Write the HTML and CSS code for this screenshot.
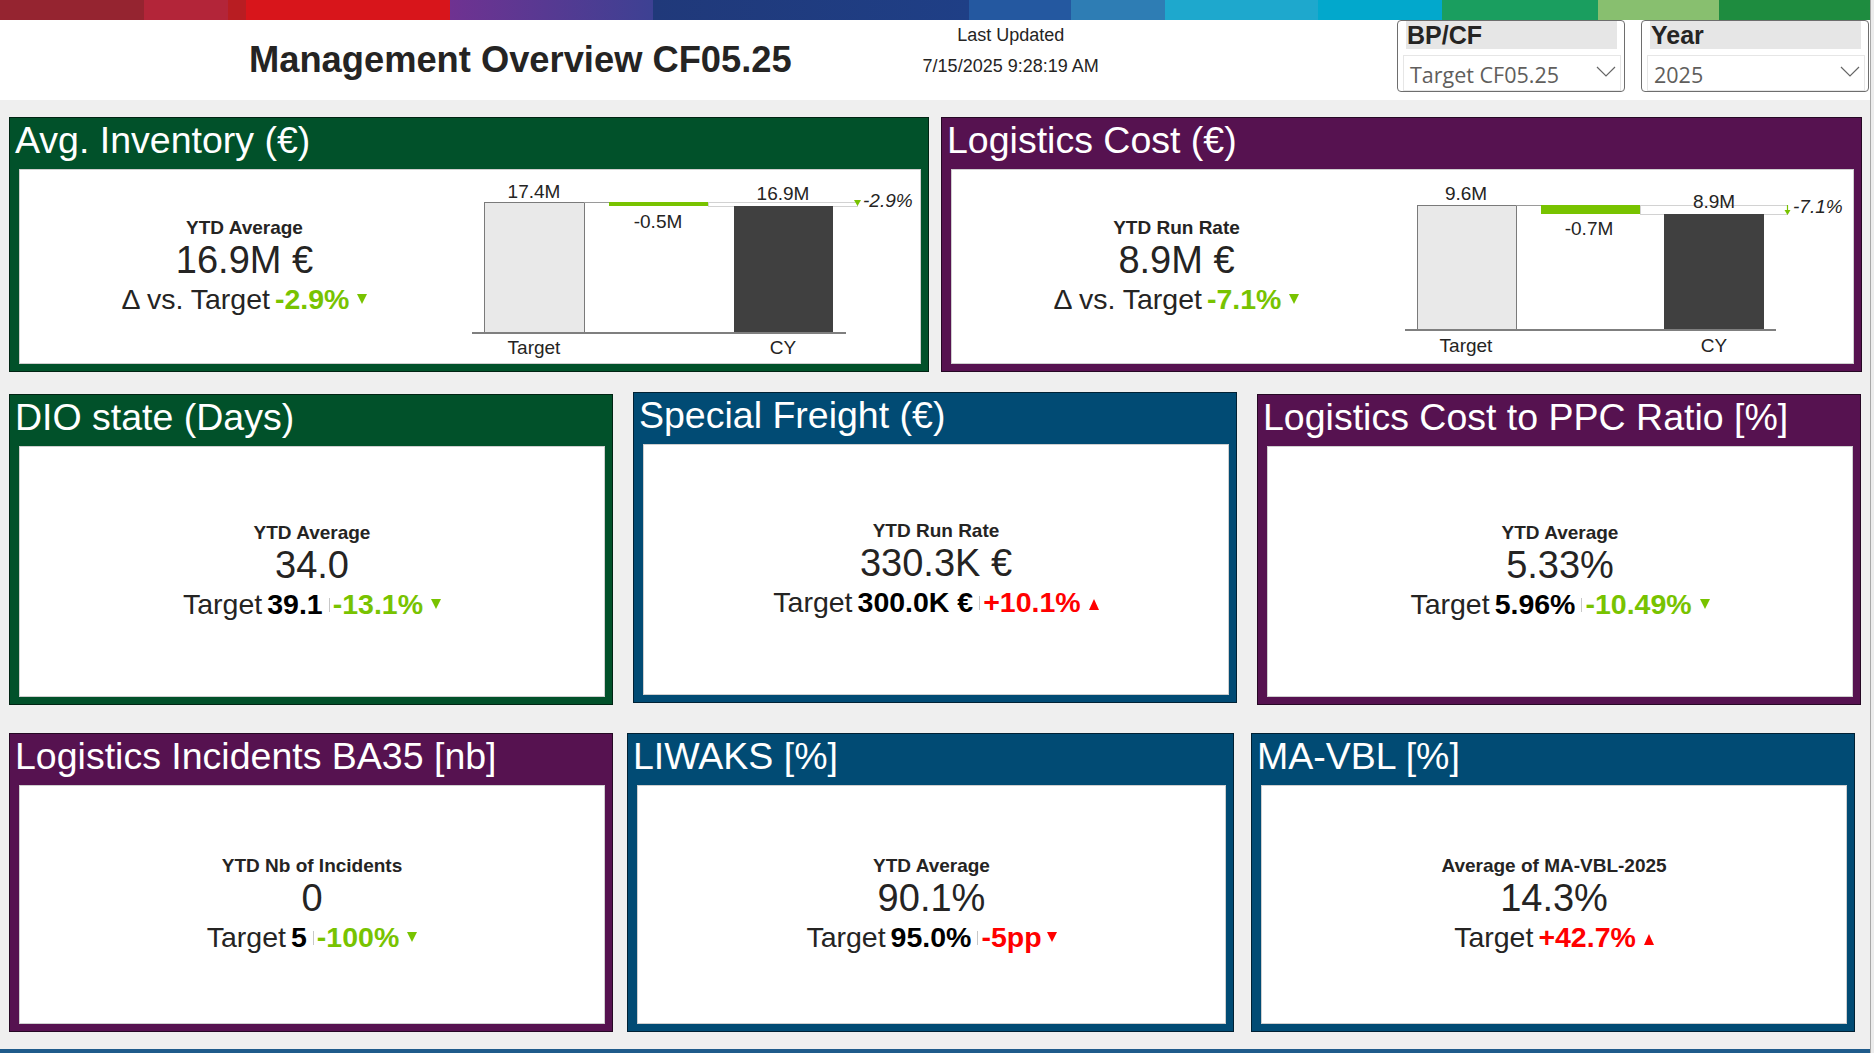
FILE: index.html
```html
<!DOCTYPE html>
<html lang="en">
<head>
<meta charset="utf-8">
<title>Management Overview CF05.25</title>
<link rel="stylesheet" href="styles.css">
</head>
<body>
<div class="page">
  <div class="topbar"></div>
  <header class="header">
    <div class="logo"></div>
    <h1 class="title">Management Overview CF05.25</h1>
    <div class="updated">
      <div>Last Updated</div>
      <div>7/15/2025 9:28:19 AM</div>
    </div>
    <div class="slicers">
      <div class="slicer">
        <div class="slicer-head">BP/CF</div>
        <div class="slicer-drop"><span>Target CF05.25</span>
          <svg class="chev" width="20" height="11" viewBox="0 0 20 11"><path d="M1 1 L10 10 L19 1" fill="none" stroke="#666" stroke-width="1.2"/></svg>
        </div>
      </div>
      <div class="slicer">
        <div class="slicer-head">Year</div>
        <div class="slicer-drop"><span>2025</span>
          <svg class="chev" width="20" height="11" viewBox="0 0 20 11"><path d="M1 1 L10 10 L19 1" fill="none" stroke="#666" stroke-width="1.2"/></svg>
        </div>
      </div>
    </div>
  </header>

  <main class="content">
    <section class="row row1">
      <div class="card green w920">
        <div class="card-title">Avg. Inventory (€)</div>
        <div class="card-body split">
          <div class="kpi kpi-col">
            <div class="kpi-label">YTD Average</div>
            <div class="kpi-value">16.9M €</div>
            <div class="kpi-delta">Δ vs. Target<b class="good gap5">-2.9%</b><span class="tri down good"></span></div>
          </div>
          <svg class="chart" width="451" height="193" viewBox="0 0 451 193">
            <rect x="15.5" y="32.5" width="100" height="131" fill="#e9e9e9" stroke="#7a7a7a" stroke-width="1"/>
            <line x1="115" y1="32.5" x2="140" y2="32.5" stroke="#9a9a9a" stroke-width="1"/>
            <rect x="140" y="32" width="99" height="4" fill="#78c300"/>
            <rect x="239.5" y="32.5" width="149" height="4" fill="none" stroke="#d2d2d2" stroke-width="1"/>
            <rect x="265" y="36" width="99" height="127" fill="#404040"/>
            <line x1="3" y1="163" x2="377" y2="163" stroke="#7f7f7f" stroke-width="2"/>
            <path d="M385 30 L392 30 L388.5 36 Z" fill="#78c300"/>
            <text x="65" y="28" class="ct" text-anchor="middle">17.4M</text>
            <text x="314" y="30" class="ct" text-anchor="middle">16.9M</text>
            <text x="189" y="58" class="ct" text-anchor="middle">-0.5M</text>
            <text x="394" y="37" class="ct it">-2.9%</text>
            <text x="65" y="184" class="ct" text-anchor="middle">Target</text>
            <text x="314" y="184" class="ct" text-anchor="middle">CY</text>
          </svg>
        </div>
      </div>
      <div class="card purple w921">
        <div class="card-title">Logistics Cost (€)</div>
        <div class="card-body split">
          <div class="kpi kpi-col">
            <div class="kpi-label">YTD Run Rate</div>
            <div class="kpi-value">8.9M €</div>
            <div class="kpi-delta">Δ vs. Target<b class="good gap5">-7.1%</b><span class="tri down good"></span></div>
          </div>
          <svg class="chart" width="452" height="193" viewBox="0 0 452 193">
            <rect x="16.5" y="35.5" width="99" height="125" fill="#e9e9e9" stroke="#7a7a7a" stroke-width="1"/>
            <line x1="115" y1="35.5" x2="140" y2="35.5" stroke="#9a9a9a" stroke-width="1"/>
            <rect x="140" y="35" width="99" height="9" fill="#78c300"/>
            <rect x="239.5" y="35.5" width="147" height="9" fill="none" stroke="#d2d2d2" stroke-width="1"/>
            <rect x="263" y="44" width="100" height="116" fill="#404040"/>
            <line x1="4" y1="160" x2="375" y2="160" stroke="#7f7f7f" stroke-width="2"/>
            <line x1="386.5" y1="35" x2="386.5" y2="42" stroke="#78c300" stroke-width="1.2"/>
            <path d="M383.5 40 L389.5 40 L386.5 45 Z" fill="#78c300"/>
            <text x="65" y="30" class="ct" text-anchor="middle">9.6M</text>
            <text x="313" y="38" class="ct" text-anchor="middle">8.9M</text>
            <text x="188" y="65" class="ct" text-anchor="middle">-0.7M</text>
            <text x="392" y="43" class="ct it">-7.1%</text>
            <text x="65" y="182" class="ct" text-anchor="middle">Target</text>
            <text x="313" y="182" class="ct" text-anchor="middle">CY</text>
          </svg>
        </div>
      </div>
    </section>

    <section class="row row2">
      <div class="card green w604">
        <div class="card-title">DIO state (Days)</div>
        <div class="card-body center">
          <div class="kpi">
            <div class="kpi-label">YTD Average</div>
            <div class="kpi-value">34.0</div>
            <div class="kpi-delta">Target<b class="tv">39.1</b><i class="sep"></i><b class="good">-13.1%</b><span class="tri down good"></span></div>
          </div>
        </div>
      </div>
      <div class="card blue w604 raised">
        <div class="card-title">Special Freight (€)</div>
        <div class="card-body center">
          <div class="kpi">
            <div class="kpi-label">YTD Run Rate</div>
            <div class="kpi-value">330.3K €</div>
            <div class="kpi-delta">Target<b class="tv">300.0K €</b><i class="sep"></i><b class="bad">+10.1%</b><span class="tri up bad"></span></div>
          </div>
        </div>
      </div>
      <div class="card purple w604">
        <div class="card-title">Logistics Cost to PPC Ratio [%]</div>
        <div class="card-body center">
          <div class="kpi">
            <div class="kpi-label">YTD Average</div>
            <div class="kpi-value">5.33%</div>
            <div class="kpi-delta">Target<b class="tv">5.96%</b><i class="sep"></i><b class="good">-10.49%</b><span class="tri down good"></span></div>
          </div>
        </div>
      </div>
    </section>

    <section class="row row3">
      <div class="card purple w604">
        <div class="card-title">Logistics Incidents BA35 [nb]</div>
        <div class="card-body center">
          <div class="kpi">
            <div class="kpi-label">YTD Nb of Incidents</div>
            <div class="kpi-value">0</div>
            <div class="kpi-delta">Target<b class="tv">5</b><i class="sep"></i><b class="good">-100%</b><span class="tri down good"></span></div>
          </div>
        </div>
      </div>
      <div class="card blue w607">
        <div class="card-title">LIWAKS [%]</div>
        <div class="card-body center">
          <div class="kpi">
            <div class="kpi-label">YTD Average</div>
            <div class="kpi-value">90.1%</div>
            <div class="kpi-delta">Target<b class="tv">95.0%</b><i class="sep"></i><b class="bad">-5pp</b><span class="tri down bad tight"></span></div>
          </div>
        </div>
      </div>
      <div class="card blue w604">
        <div class="card-title">MA-VBL [%]</div>
        <div class="card-body center">
          <div class="kpi">
            <div class="kpi-label">Average of MA-VBL-2025</div>
            <div class="kpi-value">14.3%</div>
            <div class="kpi-delta">Target<b class="bad gap5">+42.7%</b><span class="tri up bad"></span></div>
          </div>
        </div>
      </div>
    </section>
  </main>
  <div class="bottomline"></div>
</div>
</body>
</html>
```

FILE: styles.css
```css
* { box-sizing: border-box; }
html, body { margin: 0; padding: 0; }
body {
  background: #ececec;
  font-family: "Liberation Sans", Arial, sans-serif;
  color: #252423;
  width: 1874px;
  height: 1053px;
  overflow: hidden;
}
.page {
  width: 1871px;
  height: 1053px;
  background: #efefef;
  border-right: 1px solid #a8a8a8;
  display: flex;
  flex-direction: column;
}
.topbar {
  height: 20px;
  flex: none;
  background: linear-gradient(90deg,
    #952430 0 144px, #b32539 144px 228px, #b81d22 228px 246px,
    #d8151b 246px 450px, #6f3291 450px, #3d4193 653px,
    #20397a 653px, #1f3f86 969px, #2458a0 969px 1071px,
    #2e7db4 1071px 1165px, #1ea8cd 1165px 1318px, #02a8cc 1318px 1442px,
    #1a9e5f 1442px 1598px, #88bf6f 1598px 1719px, #1e8c3f 1719px);
}
.header {
  height: 80px;
  flex: none;
  background: #fff;
  display: flex;
  align-items: flex-start;
}
.logo { width: 249px; flex: none; }
.title {
  margin: 0;
  padding-top: 20px;
  font-size: 36.3px;
  line-height: 40px;
  font-weight: bold;
  color: #252423;
  white-space: nowrap;
}
.updated {
  margin-left: 124px;
  width: 190px;
  text-align: center;
  font-size: 18px;
  line-height: 31px;
  color: #252423;
  white-space: nowrap;
}
.slicers {
  margin-left: auto;
  display: flex;
  gap: 16px;
  padding-right: 1px;
}
.slicer {
  width: 228px;
  height: 72px;
  border: 1px solid #6e6e6e;
  border-radius: 4px;
  padding: 0 7px 0 8px;
  display: flex;
  flex-direction: column;
}
.slicer-head {
  height: 28px;
  background: #e6e6e6;
  font-weight: bold;
  font-size: 25px;
  line-height: 29px;
  padding-left: 1px;
  color: #252423;
}
.slicer-drop {
  margin: 6px -4px 0 -3px;
  height: 36px;
  border: 1px solid #e6e6e6;
  display: flex;
  align-items: center;
  justify-content: space-between;
  padding: 2px 4px 0 6px;
  font-family: "Open Sans", "Noto Sans", sans-serif;
  font-size: 21.5px;
  color: #605e5c;
}
.chev { margin-top: -6px; }

.content {
  flex: none;
  padding-top: 17px;
}
.row {
  display: flex;
  align-items: flex-start;
  padding-left: 9px;
}
.row1 { height: 255px; gap: 12px; }
.row2 { height: 311px; margin-top: 22px; gap: 20px; }
.row3 { height: 299px; margin-top: 28px; }
.row3 .card:nth-child(2) { margin-left: 14px; }
.row3 .card:nth-child(3) { margin-left: 17px; }

.card {
  height: 100%;
  border: 1px solid rgba(0, 0, 0, 0.55);
  padding: 0 7px 7px 9px;
  display: flex;
  flex-direction: column;
}
.row2 .card.raised { margin-top: -2px; }
.w920 { width: 920px; }
.w921 { width: 921px; }
.w604 { width: 604px; }
.w607 { width: 607px; }
.green { background: #01512a; }
.purple { background: #561250; }
.blue { background: #014b74; }

.card-title {
  height: 51px;
  flex: none;
  margin-left: -4px;
  font-size: 37.5px;
  line-height: 44px;
  color: #fff;
  white-space: nowrap;
}
.card-body {
  flex: 1;
  background: #fff;
  border: 1px solid #cfcfcf;
  min-height: 0;
}
.card-body.split { display: flex; }
.card-body.center {
  display: flex;
  align-items: center;
  justify-content: center;
}
.kpi { text-align: center; white-space: nowrap; }
.kpi-col {
  width: 449px;
  flex: none;
  display: flex;
  flex-direction: column;
  justify-content: center;
}
.kpi-label {
  font-size: 19px;
  line-height: 22px;
  font-weight: bold;
  color: #252423;
}
.kpi-value {
  font-size: 38px;
  line-height: 42px;
  color: #252423;
}
.kpi-delta {
  font-size: 28.5px;
  line-height: 36px;
  color: #252423;
}
.kpi-delta b { font-weight: bold; }
.tv { color: #000; margin-left: 5px; }
.gap5 { margin-left: 5px; }
.good { color: #78c300; }
.bad { color: #f00; }
.sep {
  display: inline-block;
  width: 1px;
  height: 14px;
  background: #c8c8c8;
  margin: 0 3px 0 6px;
  vertical-align: 2px;
}
.tri {
  display: inline-block;
  width: 0;
  height: 0;
  border-left: 5.5px solid transparent;
  border-right: 5.5px solid transparent;
  margin-left: 8px;
}
.tri.down { border-top: 10px solid currentColor; vertical-align: 5px; }
.tri.up { border-bottom: 11px solid currentColor; vertical-align: 2px; }
.tri.tight { margin-left: 5px; }

.chart { display: block; flex: none; }
.ct {
  font-family: "Liberation Sans", Arial, sans-serif;
  font-size: 19px;
  fill: #252423;
}
.ct.it { font-style: italic; }

.bottomline {
  margin-top: auto;
  height: 4px;
  background: #1f5b8b;
  flex: none;
}
```
